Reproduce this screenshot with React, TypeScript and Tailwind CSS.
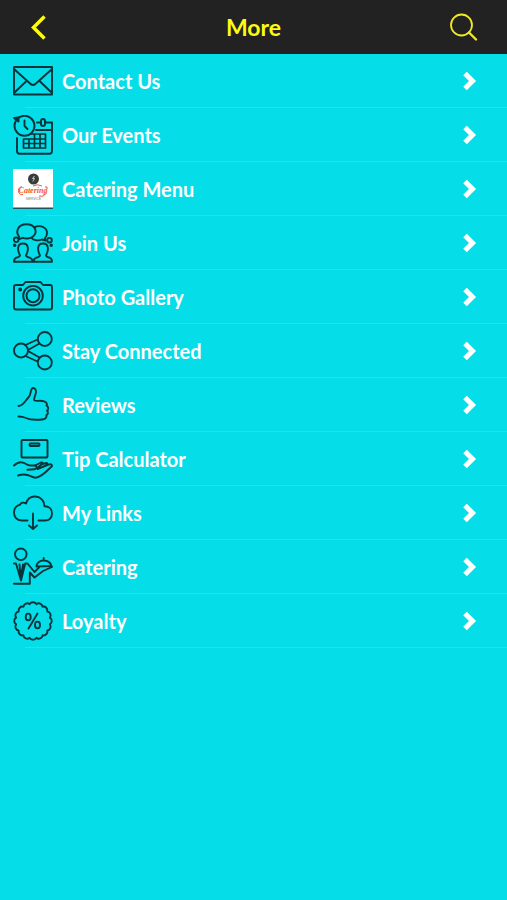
import React from "react";

type IconProps = { children: React.ReactNode };

function LineIcon({ children }: IconProps): React.JSX.Element {
  return (
    <svg
      viewBox="0 0 40 40"
      className="size-10 shrink-0"
      fill="none"
      stroke="#06343b"
      strokeWidth="1.9"
      strokeLinecap="round"
      strokeLinejoin="round"
      aria-hidden="true"
    >
      {children}
    </svg>
  );
}

function MailIcon() {
  return (
    <LineIcon>
      <rect x="1" y="6" width="38" height="27.5" />
      <path d="M1 8 16.500 22Q20 26 23.500 22L39 8M1.500 31.500 13.500 20M38.500 31.500 26.500 20" />
    </LineIcon>
  );
}

function EventsIcon() {
  return (
    <LineIcon>
      <circle cx="11.5" cy="10.8" r="10" />
      <path d="M11.5 5.500V11L14.5 14" />
      <path d="M1 3 5.500 2.500 5.500 6.500Z" fill="#06343b" />
      <path d="M24 7.500H27.500M32.500 7.500H39V36Q39 38.700 36.500 38.700H6.500Q4 38.700 4 36V23M23 15H39" />
      <rect x="28" y="4" width="4" height="7" rx="2" />
      <path d="M18.500 19H32.500V33H10.500V24.500M10.500 24H32.500M10.500 28.500H32.500M16 24V33M21.500 19V33M27 19V33" strokeWidth="1.7" />
    </LineIcon>
  );
}

function CateringLogo() {
  return (
    <svg viewBox="0 0 40 40" className="size-10 shrink-0" aria-hidden="true">
      <rect width="40" height="40" fill="#ffffff" />
      <rect y="38.5" width="40" height="1.5" fill="#24525c" />
      <circle cx="20.5" cy="10" r="5.5" fill="#3a3b3d" />
      <path d="M21.5 7 19.5 9.5H21.5L19.8 12.5" stroke="#c9c9c9" fill="none" />
      <text
        x="20"
        y="24"
        textAnchor="middle"
        fontFamily="Liberation Serif, serif"
        fontSize="8"
        fontStyle="italic"
        fontWeight="700"
        fill="#f0592f"
      >
        Catering
      </text>
      <path
        d="M9 17.500Q4 19 6 24Q7 26.500 10 25.500M31 24Q33 28 26 27M32 18Q35 17 34 20M20 17Q24 14.500 29 17"
        stroke="#f0592f"
        strokeWidth="1"
        fill="none"
      />
      <text
        x="20.5"
        y="30.5"
        textAnchor="middle"
        fontFamily="Liberation Sans, sans-serif"
        fontSize="3.5"
        fill="#777777"
      >
        SERVICE
      </text>
    </svg>
  );
}

function JoinIcon() {
  return (
    <LineIcon>
      <path d="M6 13.500C2.500 9 4.500 1.200 13.500 1.200C22.500 1.200 25 9.500 20 13.500C17 15.800 12.500 16 10 14.800L6 16.200Z" />
      <path d="M22 4C28 1.500 34.500 5 34 10.500Q33.800 13.500 32 15L32.500 17.500 29 16.500C25.500 18 20.500 17.500 18.500 15" />
      <circle cx="3.200" cy="16.800" r="2.300" />
      <circle cx="36.500" cy="17.200" r="2.300" />
      <circle cx="1.700" cy="22.300" r="0.8" fill="#06343b" />
      <circle cx="38.200" cy="22.300" r="0.8" fill="#06343b" />
      <path d="M7 32.500C4.500 28 3.500 20.500 10 20.500S15.500 28 13 32.500Q13.500 34 17 34.800Q19.500 35.500 19.500 38.700H1Q1 35.500 3 34.800Q6.500 34 7 32.500Z" />
      <path d="M27 32.500C24.500 28 23.500 20.500 30 20.500S35.500 28 33 32.500Q33.500 34 37 34.800Q39 35.500 39 38.700H20.500Q20.500 35.500 23 34.800Q26.500 34 27 32.500Z" />
    </LineIcon>
  );
}

function CameraIcon() {
  return (
    <LineIcon>
      <path d="M3 8H10L12.500 5H27.500L30 8H37Q39 8 39 10V30.500Q39 32.500 37 32.500H3Q1 32.500 1 30.500V10Q1 8 3 8Z" />
      <circle cx="20" cy="18.700" r="9.800" />
      <circle cx="20" cy="18.700" r="6.500" />
      <circle cx="7.200" cy="12.500" r="1" fill="#06343b" />
    </LineIcon>
  );
}

function ShareIcon() {
  return (
    <LineIcon>
      <circle cx="8" cy="19.500" r="7" />
      <circle cx="31.800" cy="8" r="7" />
      <circle cx="31.800" cy="31.500" r="7" />
      <path d="M12.500 14 24.500 8.500M15 19 26.500 12.500M12.500 25 24.500 30.500M15 20 26.500 26.500" />
    </LineIcon>
  );
}

function ThumbIcon() {
  return (
    <LineIcon>
      <path d="M5.500 21C10.500 20.500 11.500 16.500 15 13C18.500 9.500 17 7 18.500 4.500C19.500 2 22.500 3 23 6C23.500 9.500 20 12.500 21.500 15.500C23.500 16.500 28 15 31.500 16.500C34.500 17.500 34 20 33.500 20.500C36 22 35.500 25 34 25.500C35.500 27.500 35 29.500 33.500 30C34 33 32 34.200 29 34.500C22 35.200 17 35 13 33Q9.500 31.500 5.500 31.500" />
    </LineIcon>
  );
}

function TipIcon() {
  return (
    <LineIcon>
      <rect x="8.500" y="1" width="26" height="17.500" rx="1" />
      <rect x="16.500" y="4.500" width="10" height="2.500" rx="1" />
      <path d="M1 26.500C6 21.500 10 22.500 14 25.500C16 27 19 26.500 22 26.500C24.500 27 24 30 21.500 30.200L14.500 30.800" />
      <path d="M22 26.500 28 23.500Q30 23 29.500 24.500L25 28.500M29.500 25 33.500 24Q35 24.200 33.500 26M24.500 30 35.500 25.500Q39 24.500 39 27C34 32 28 38.700 22.500 38.700C17 38.700 16 33 5 36.500" />
    </LineIcon>
  );
}

function CloudIcon() {
  return (
    <LineIcon>
      <path d="M14.500 27.500H9C3.500 27.500 1 23.500 1 19.800C1 15 4 12.300 7 11.800C7.500 9.500 10.500 9 13 10.500C14.500 5.500 18.500 3.200 22.500 3.500C28 4 31.500 8 31.500 13.300C36 13.300 39 16 39 20.500C39 25 36 27.500 32 27.500H25.500" />
      <path d="M20 20.500V36M16 32.500 20 36 24 32.500" />
    </LineIcon>
  );
}

function WaiterIcon() {
  return (
    <LineIcon>
      <circle cx="7.800" cy="7.300" r="5.800" />
      <path d="M1 16.500H3L8 33.500 12.200 16.500H14.500L21.500 25 26 20.500M6.500 17.500 7.800 31 10 17.500" />
      <path d="M1 36.800H16.800V25.500L21.500 30.500 30 24 39 20" />
      <path d="M23.500 19.500C23.500 16 26.500 13.500 30.500 13.500C35 13.500 37.500 15.500 38.500 19ZM30.700 13V11" />
    </LineIcon>
  );
}

// sixteen small arcs bulging outwards around a circle
const badgePath =
  Array.from({ length: 17 }, (_, i) => {
    const angle = ((i + 0.5) * Math.PI) / 8;
    const x = (20 + 17.2 * Math.cos(angle)).toFixed(2);
    const y = (20 + 17.2 * Math.sin(angle)).toFixed(2);
    return i === 0 ? `M${x} ${y}` : `A3.9 3.9 0 0 1 ${x} ${y}`;
  }).join("") + "Z";

function LoyaltyIcon() {
  return (
    <LineIcon>
      <path d={badgePath} />
      <ellipse cx="15.200" cy="16" rx="2.500" ry="3.400" />
      <ellipse cx="24.500" cy="24" rx="2.500" ry="3.400" />
      <path d="M24.500 12.500 15.500 27.500" />
    </LineIcon>
  );
}

const items = [
  { label: "Contact Us", icon: MailIcon },
  { label: "Our Events", icon: EventsIcon },
  { label: "Catering Menu", icon: CateringLogo },
  { label: "Join Us", icon: JoinIcon },
  { label: "Photo Gallery", icon: CameraIcon },
  { label: "Stay Connected", icon: ShareIcon },
  { label: "Reviews", icon: ThumbIcon },
  { label: "Tip Calculator", icon: TipIcon },
  { label: "My Links", icon: CloudIcon },
  { label: "Catering", icon: WaiterIcon },
  { label: "Loyalty", icon: LoyaltyIcon },
];

function Header() {
  return (
    <header className="grid h-[54px] grid-cols-[1fr_auto_1fr] items-center bg-[#222222] px-6 text-[#fdfb14]">
      <button type="button" aria-label="Back" className="justify-self-start">
        <svg viewBox="0 0 28 28" className="size-7" fill="none" stroke="currentColor" strokeWidth="3.5">
          <path d="M20.500 3.500 9.500 14.500 20.500 25.500" />
        </svg>
      </button>
      <h1 className="text-[23px] font-bold">More</h1>
      <button type="button" aria-label="Search" className="justify-self-end">
        <svg viewBox="0 0 36 28" className="h-7 w-9" fill="none" stroke="#f0ea20" strokeWidth="1.8">
          <circle cx="14.500" cy="12" r="10.500" />
          <path d="M22 19.500 29 26.500" strokeWidth="2.400" strokeLinecap="round" />
        </svg>
      </button>
    </header>
  );
}

export default function App(): React.JSX.Element {
  return (
    <div className="min-h-screen bg-[#05dee9] font-['Lato',sans-serif]">
      <Header />
      <ul>
        {items.map(({ label, icon: Icon }) => (
          <li key={label}>
            <a href="#" className="flex h-[54px] flex-col pl-[13px] text-white">
              <span className="flex grow items-center gap-[9px] pr-[30px]">
                <Icon />
                <span className="grow text-xl font-bold">{label}</span>
                <svg viewBox="0 0 16 20" className="h-5 w-4" fill="none" stroke="currentColor" strokeWidth="5" aria-hidden="true">
                  <path d="M4 2.500 11.500 10 4 17.500" />
                </svg>
              </span>
              <span className="ml-3 h-px bg-[#1de4ed]" />
            </a>
          </li>
        ))}
      </ul>
    </div>
  );
}
